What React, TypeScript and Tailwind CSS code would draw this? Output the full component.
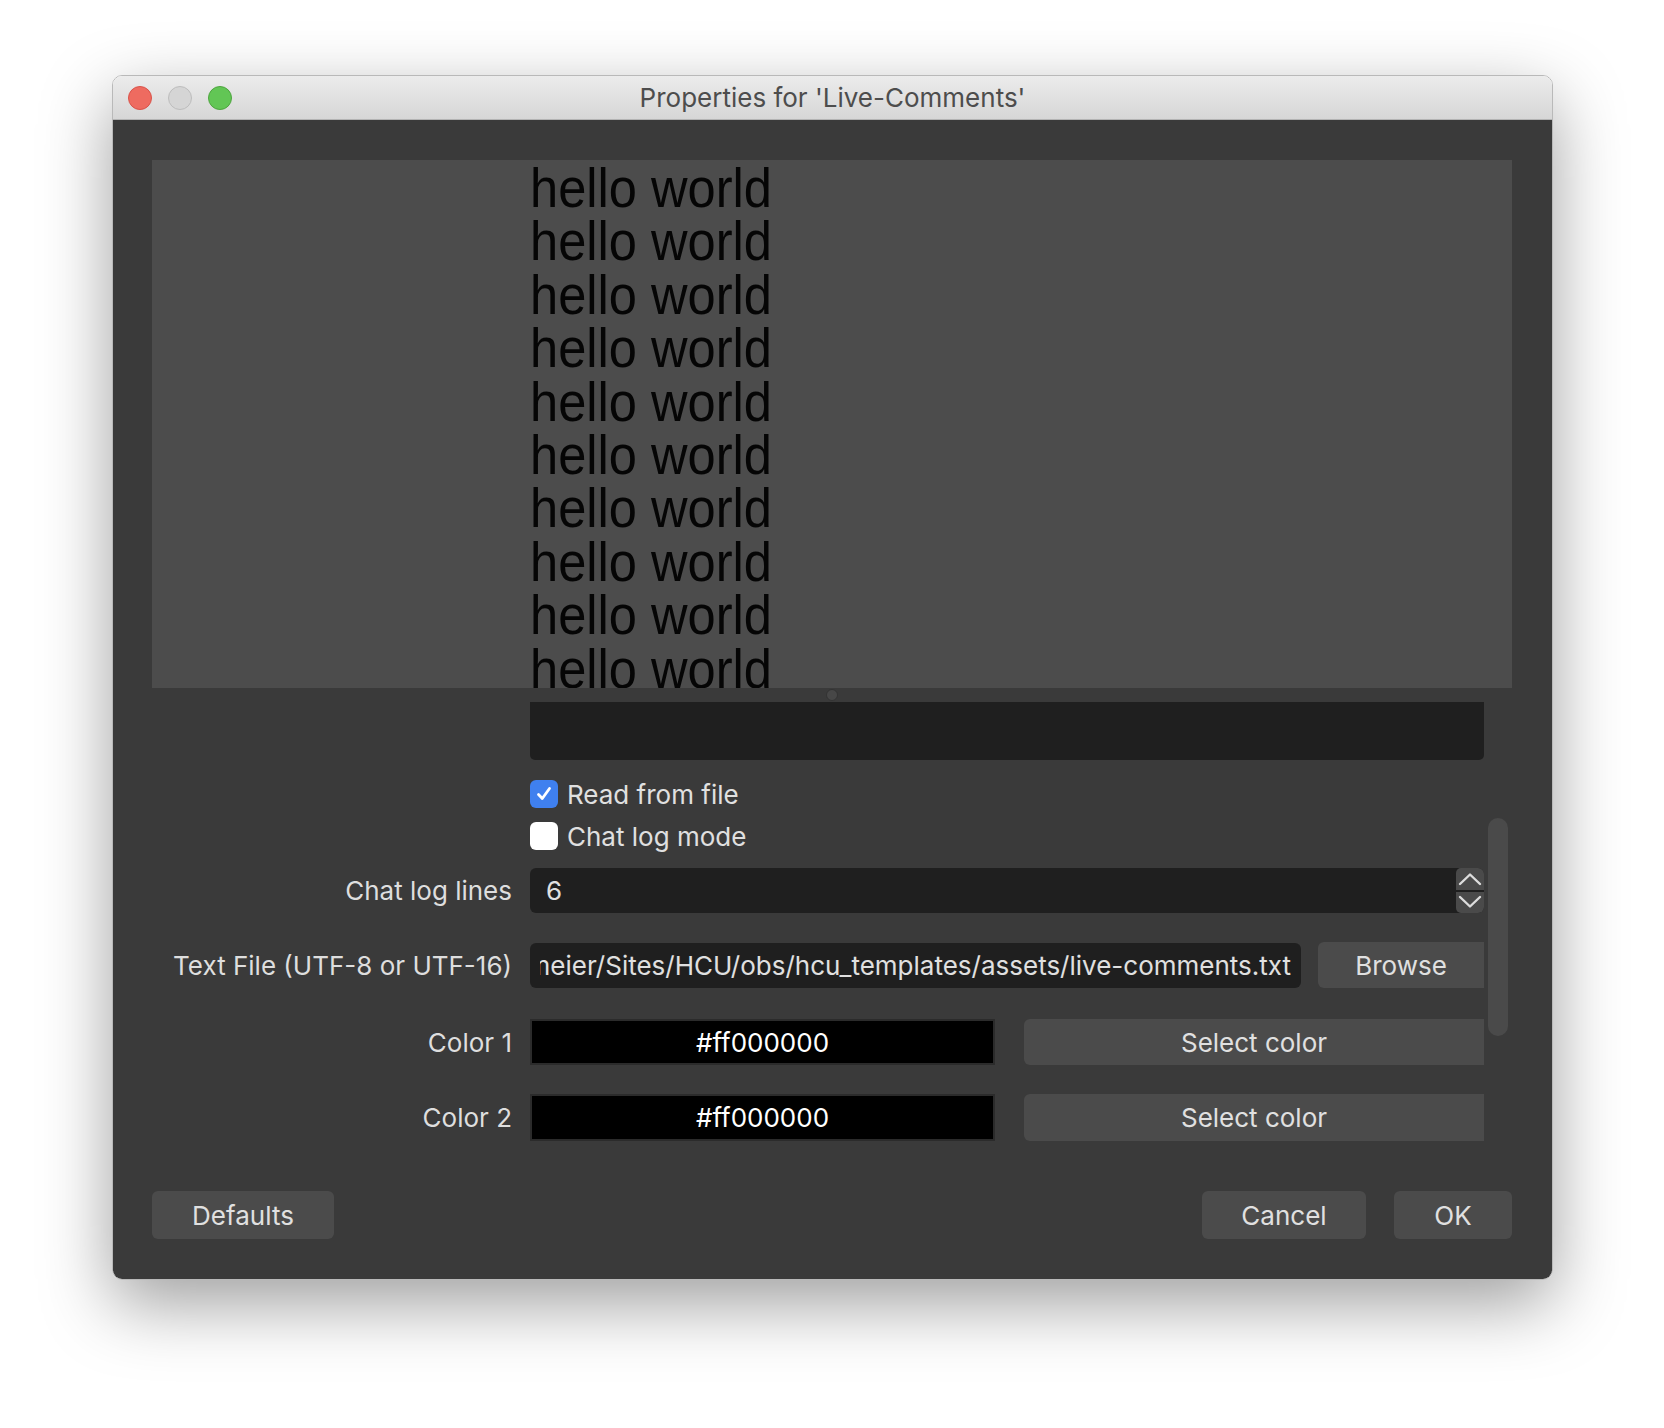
import React from 'react'

const lines = Array.from({ length: 10 }, () => 'hello world')

function Row({ label, className, children }: { label?: string; className: string; children: React.ReactNode }) {
  return (
    <div className={'flex items-center ' + className}>
      <div className="w-[378px] shrink-0 pr-[18px] text-right text-[26px] text-[#dedede]">{label}</div>
      {children}
    </div>
  )
}

function Chevron({ up }: { up: boolean }) {
  return (
    <svg width="24" height="14" viewBox="0 0 24 14" fill="none" stroke="#dcdcdc" strokeWidth={2.4} strokeLinecap="round" strokeLinejoin="round">
      {up ? <path d="M2 12 L12 2.5 L22 12" /> : <path d="M2 2 L12 11.5 L22 2" />}
    </svg>
  )
}

function Button({ text, className }: { text: string; className: string }) {
  return (
    <button className={'flex items-center justify-center bg-[#4b4b4b] text-[26px] text-[#e0e0e0] ' + className}>
      {text}
    </button>
  )
}

export default function App() {
  return (
    <div className="h-[1428px] w-[1664px] bg-white pt-[75px] pl-[112px] font-['Inter','Liberation_Sans',sans-serif]">
      <div className="flex h-[1205px] w-[1441px] flex-col overflow-hidden rounded-[10px] border border-[#b9b9b9] shadow-[0_24px_70px_rgba(0,0,0,0.38)]">
        {/* title bar */}
        <div className="relative flex h-[44px] shrink-0 items-center border-b border-[#b3b3b3] bg-gradient-to-b from-[#ececec] to-[#d6d6d6] px-[15px]">
          <div className="flex gap-[16px]">
            <div className="h-[24px] w-[24px] rounded-full border border-[#d9534a] bg-[#ee6b60]" />
            <div className="h-[24px] w-[24px] rounded-full border border-[#bdbdbd] bg-[#d5d5d5]" />
            <div className="h-[24px] w-[24px] rounded-full border border-[#4ea53f] bg-[#62c655]" />
          </div>
          <div className="absolute inset-x-0 top-0 flex h-full items-center justify-center text-[26px] text-[#4d4d4d]">
            Properties for 'Live-Comments'
          </div>
        </div>

        {/* content */}
        <div className="flex flex-1 flex-col bg-[#3a3a3a] pl-[39px] pr-[40px] pt-[40px] pb-[40px]">
          {/* preview */}
          <div className="h-[528px] shrink-0 overflow-hidden bg-[#4c4c4c] pl-[378px] pt-[2px]">
            {lines.map((l, i) => (
              <div
                key={i}
                className="origin-left scale-x-[0.92] whitespace-nowrap font-['Liberation_Sans',Arial,sans-serif] text-[55px] leading-[53.4px] text-[#050505]"
              >
                {l}
              </div>
            ))}
          </div>

          <div className="relative flex flex-col">
            {/* splitter */}
            <div className="flex h-[14px] items-center justify-center">
              <div className="h-[12px] w-[12px] rounded-full border border-[#333] bg-[#474747]" />
            </div>

            <Row className="h-[58px]">
              <div className="h-full w-[954px] rounded-b-[5px] bg-[#1f1f1f]" />
            </Row>

            <Row className="mt-[16px] h-[36px]">
              <div className="flex items-center gap-[9px] text-[26px] text-[#e0e0e0]">
                <div className="flex h-[28px] w-[28px] items-center justify-center rounded-[6px] bg-[#3f80ef]">
                  <svg width="20" height="20" viewBox="0 0 20 20" fill="none" stroke="#fff" strokeWidth={2.8} strokeLinecap="round" strokeLinejoin="round">
                    <path d="M4.5 10.5 L8.3 14.5 L15.5 4.5" />
                  </svg>
                </div>
                Read from file
              </div>
            </Row>

            <Row className="mt-[6px] h-[36px]">
              <div className="flex items-center gap-[9px] text-[26px] text-[#e0e0e0]">
                <div className="h-[28px] w-[28px] rounded-[6px] bg-white" />
                Chat log mode
              </div>
            </Row>

            <Row label="Chat log lines" className="mt-[14px] h-[45px]">
              <div className="flex h-full w-[954px] overflow-hidden rounded-[6px] bg-[#1f1f1f]">
                <div className="flex flex-1 items-center px-[16px] text-[26px] text-[#e0e0e0]">6</div>
                <div className="flex w-[28px] flex-col overflow-hidden rounded-l-[5px] bg-[#4a4a4a]">
                  <div className="flex flex-1 items-center justify-center">
                    <Chevron up />
                  </div>
                  <div className="h-[2px] bg-[#1f1f1f]" />
                  <div className="flex flex-1 items-center justify-center">
                    <Chevron up={false} />
                  </div>
                </div>
              </div>
            </Row>

            <Row label="Text File (UTF-8 or UTF-16)" className="mt-[29px] h-[46px]">
              <div className="flex h-[45px] w-[771px] items-center rounded-[6px] bg-[#1f1f1f] px-[10px]">
                <div className="flex flex-1 justify-end overflow-hidden whitespace-nowrap text-[26px] text-[#e0e0e0]">
                  /Users/tmeier/Sites/HCU/obs/hcu_templates/assets/live-comments.txt
                </div>
              </div>
              <Button text="Browse" className="ml-[17px] h-full w-[166px] rounded-l-[6px]" />
            </Row>

            <Row label="Color 1" className="mt-[31px] h-[46px]">
              <div className="flex h-full w-[465px] items-center justify-center border-2 border-[#2b2b2b] bg-black text-[26px] text-white">
                #ff000000
              </div>
              <Button text="Select color" className="ml-[29px] h-full w-[460px] rounded-l-[6px]" />
            </Row>

            <Row label="Color 2" className="mt-[29px] h-[47px]">
              <div className="flex h-full w-[465px] items-center justify-center border-2 border-[#2b2b2b] bg-black text-[26px] text-white">
                #ff000000
              </div>
              <Button text="Select color" className="ml-[29px] h-full w-[460px] rounded-l-[6px]" />
            </Row>

            {/* overlay scrollbar */}
            <div className="absolute left-[1336px] top-[130px] h-[218px] w-[20px] rounded-full bg-[#4a4a4a]" />
          </div>

          <div className="mt-auto flex h-[48px] items-center">
            <Button text="Defaults" className="h-full w-[182px] rounded-[6px]" />
            <div className="flex-1" />
            <Button text="Cancel" className="h-full w-[164px] rounded-[6px]" />
            <Button text="OK" className="ml-[28px] h-full w-[118px] rounded-[6px]" />
          </div>
        </div>
      </div>
    </div>
  )
}
